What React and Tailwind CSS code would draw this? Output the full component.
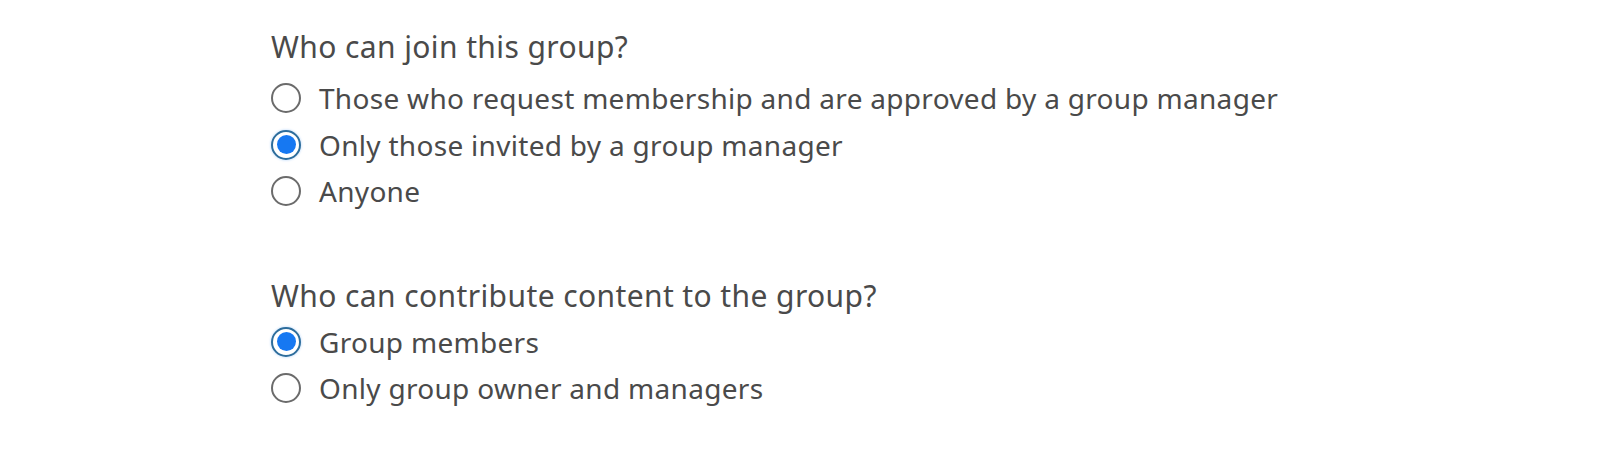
import { useState } from 'react';

function Radio({ checked, label, onSelect }) {
  return (
    <label className="flex items-center h-[46.5px] cursor-pointer" onClick={onSelect}>
      {checked ? (
        <span className="w-[30px] h-[30px] rounded-full border-[2px] border-[#2d6d9c] flex items-center justify-center shrink-0 bg-white shadow-[0_0_2px_1px_rgba(22,120,242,0.15)]">
          <span className="w-[19px] h-[19px] rounded-full bg-[#1678f2]"></span>
        </span>
      ) : (
        <span className="w-[30px] h-[30px] rounded-full border-[2px] border-[#6b6b6b] shrink-0 bg-white"></span>
      )}
      <span className="ml-[18px] text-[28px] tracking-[0.3px] text-[#4a4a4a] leading-none">{label}</span>
    </label>
  );
}

export default function App() {
  const [join, setJoin] = useState(1);
  const [contribute, setContribute] = useState(0);

  const joinOptions = [
    'Those who request membership and are approved by a group manager',
    'Only those invited by a group manager',
    'Anyone',
  ];
  const contributeOptions = ['Group members', 'Only group owner and managers'];

  return (
    <div className="w-[1600px] h-[449px] bg-white font-['Noto_Sans',sans-serif] pl-[271px] pt-[25px]">
      <h2 className="text-[30px] tracking-[0.4px] text-[#4a4a4a] leading-[44px] mb-[6px]">Who can join this group?</h2>
      <div>
        {joinOptions.map((o, i) => (
          <Radio key={o} label={o} checked={join === i} onSelect={() => setJoin(i)} />
        ))}
      </div>
      <h2 className="text-[30px] tracking-[0.4px] text-[#4a4a4a] leading-[44px] mt-[59px] mb-[1px]">Who can contribute content to the group?</h2>
      <div>
        {contributeOptions.map((o, i) => (
          <Radio key={o} label={o} checked={contribute === i} onSelect={() => setContribute(i)} />
        ))}
      </div>
    </div>
  );
}
